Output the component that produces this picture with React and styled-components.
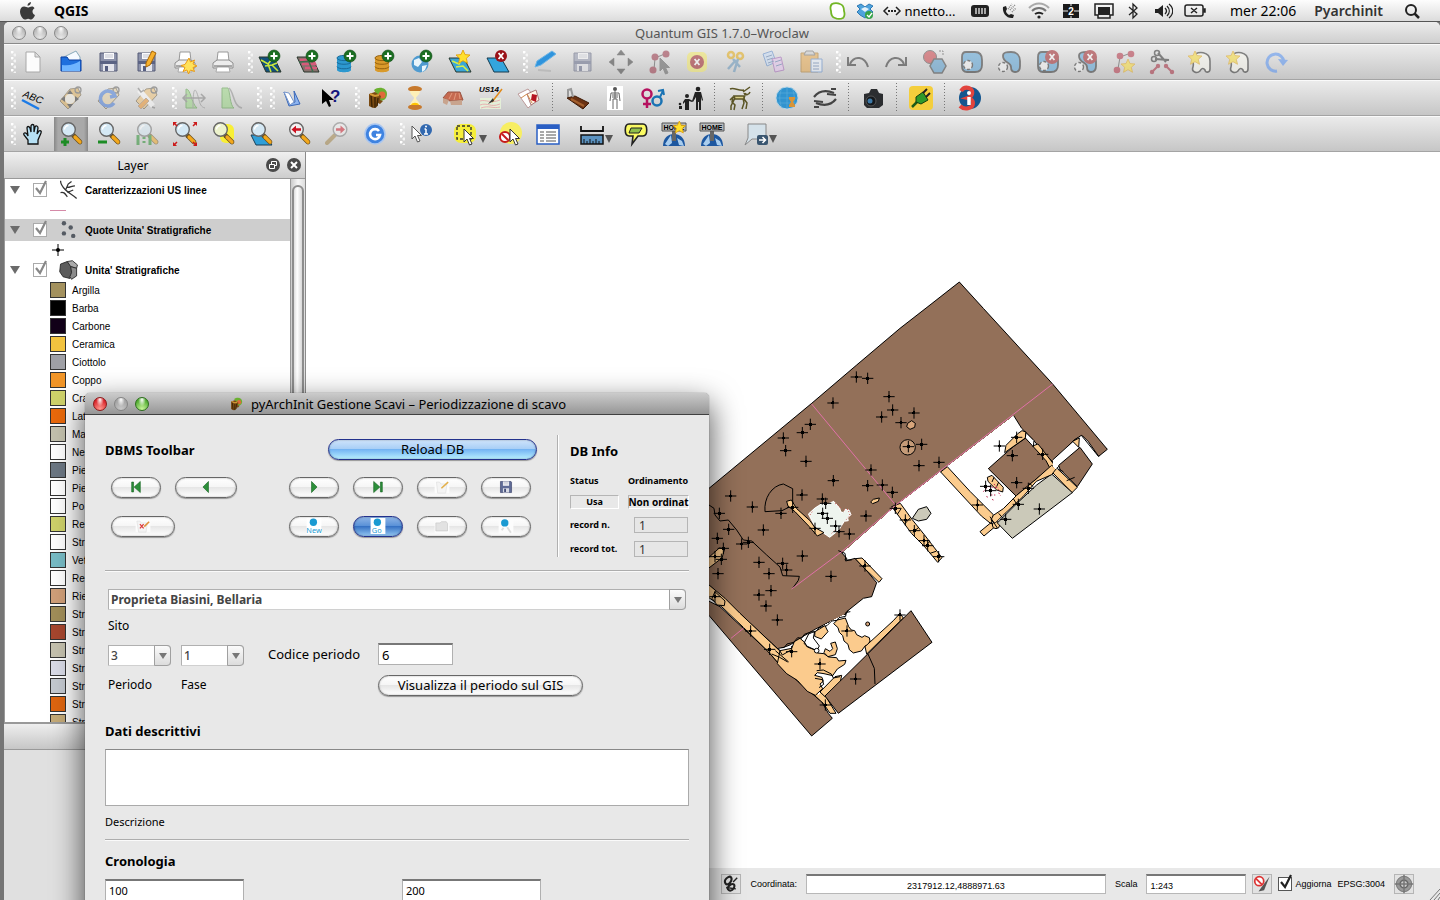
import React from 'react';
import styled, { createGlobalStyle } from 'styled-components';

const ui = '"Lucida Grande", "Noto Sans", "Open Sans", sans-serif';
const helv = '"Liberation Sans", Helvetica, sans-serif';

const GlobalStyle = createGlobalStyle`
  *, *::before, *::after { box-sizing: border-box; }
  html, body { margin: 0; height: 100%; }
  body { font-family: ${ui}; font-size: 13px; color: #000; background: #757575; overflow: hidden; }
  button, input, select, textarea { font: inherit; color: inherit; margin: 0; }
  svg { flex: none; }
`;

/* ---------- shell ---------- */
const Desktop = styled.div`
  position: relative;
  display: flex;
  flex-direction: column;
  height: 100vh;
  overflow: hidden;
  background: #757575;
`;
const MenuBar = styled.header`
  display: flex;
  align-items: center;
  flex: none;
  height: 22px;
  padding: 0 19px 0 18px;
  background: linear-gradient(#fdfdfd, #dcdcdc);
  border-bottom: 1px solid #555;
  font-size: 14px;
  line-height: 20px;
`;
const AppName = styled.strong`
  margin-left: 16px;
`;
const StatusItems = styled.div`
  display: flex;
  align-items: center;
  margin-left: auto;
`;
const StatusItem = styled.span`
  display: flex;
  justify-content: center;
  width: ${(p) => p.$w}px;
  font-size: 13px;
`;
const Clock = styled.span`
  margin: 0 18px 0 15px;
  white-space: nowrap;
`;
const UserName = styled.span`
  margin-right: 20px;
  font-weight: 600;
  color: #333;
`;
const MainWindow = styled.main`
  display: flex;
  flex-direction: column;
  flex: 1;
  min-height: 0;
  margin-left: 4px;
  background: #e8e8e8;
  border-radius: 5px 5px 0 0;
  overflow: hidden;
`;
const TitleBar = styled.div`
  position: relative;
  display: flex;
  align-items: center;
  justify-content: center;
  gap: 7px;
  flex: none;
  height: 22px;
  border-bottom: 1px solid ${(p) => (p.$active ? '#404040' : '#8a8a8a')};
  background: ${(p) => (p.$active ? 'linear-gradient(#cbcbcb, #969696)' : 'linear-gradient(#ececec, #cfcfcf)')};
  color: ${(p) => (p.$active ? '#000' : '#555')};
  border-radius: 5px 5px 0 0;
  line-height: 20px;
`;
const Lights = styled.div`
  position: absolute;
  left: 8px;
  top: 4px;
  display: flex;
  gap: 7px;
`;
const Light = styled.button`
  width: 14px;
  height: 14px;
  padding: 0;
  border: 1px solid ${(p) => p.$edge || '#888'};
  border-radius: 50%;
  background: radial-gradient(ellipse at 50% 15%, #fff 0, transparent 45%),
    radial-gradient(circle at 50% 90%, ${(p) => p.$glow || '#e8e8e8'}, ${(p) => p.$c || '#b8b8b8'} 75%);
`;

/* ---------- toolbars ---------- */
const Toolbar = styled.div`
  display: flex;
  align-items: stretch;
  gap: 1px;
  flex: none;
  height: 36px;
  border-top: 1px solid #fafafa;
  border-bottom: 1px solid #a4a4a4;
  background: linear-gradient(#ebebeb, #c6c6c6);
`;
const ToolGroup = styled.div`
  display: flex;
  gap: 4px;
  min-width: 12px;
`;
const Handle = styled.span`
  width: 5px;
  margin: 6px -4px 6px 7px;
  background:
    radial-gradient(circle at 1px 1px, #fff 1px, transparent 2px) 0 0 / 5px 6px,
    radial-gradient(circle at 4px 4px, #f4f4f4 1px, transparent 2px) 0 0 / 5px 6px;
`;
const ToolButton = styled.button`
  display: flex;
  align-items: center;
  justify-content: ${(p) => (p.$menu ? 'flex-end' : 'center')};
  width: ${(p) => (p.$menu ? 46 : 34)}px;
  padding: 0 ${(p) => (p.$menu ? 2 : 0)}px 0 0;
  border: 0;
  background: ${(p) => (p.$on ? 'linear-gradient(90deg, #888, #a9a9a9 12%, #a9a9a9 88%, #888)' : 'none')};
  svg { opacity: ${(p) => (p.$off ? 0.5 : 1)}; }
`;
const Separator = styled.span`
  width: 6px;
  margin: 2px 0;
  background: repeating-linear-gradient(#777 0 1px, transparent 1px 3px) 2px 0 / 1px 100% no-repeat;
`;
const MenuArrow = styled.i`
  width: 0;
  margin-top: 10px;
  border: 4px solid transparent;
  border-top: 8px solid #555;
  border-bottom: 0;
`;

/* ---------- layer dock ---------- */
const Workspace = styled.div`
  display: flex;
  flex: 1;
  min-height: 0;
`;
const Dock = styled.aside`
  display: flex;
  flex-direction: column;
  flex: none;
  width: 302px;
  border-right: 1px solid #8c8c8c;
  background: #e0e0e0;
`;
const DockHeader = styled.div`
  display: flex;
  align-items: center;
  flex: none;
  gap: 7px;
  height: 27px;
  padding: 0 4px 0 3px;
  border-bottom: 1px solid #999;
  background: linear-gradient(#f0f0f0, #cdcdcd);
  font-size: 12px;
`;
const DockTitle = styled.span`
  flex: 1;
  text-align: center;
`;
const RoundButton = styled.button`
  display: flex;
  width: 14px;
  height: 14px;
  padding: 0;
  border: 0;
  border-radius: 50%;
  background: #4a4a4a;
`;
const TreeArea = styled.div`
  display: flex;
  flex: 1;
  min-height: 0;
  border-left: 1px solid #999;
  background: #fff;
`;
const Tree = styled.div`
  flex: 1;
  overflow: hidden;
  font-family: ${helv};
  font-size: 10px;
`;
const LayerRow = styled.label`
  display: flex;
  align-items: center;
  height: 22px;
  padding-left: 5px;
  font-weight: bold;
  background: ${(p) => (p.$selected ? '#cecece' : 'transparent')};
`;
const Disclosure = styled.i`
  width: 0;
  margin-right: 13px;
  border: 5px solid transparent;
  border-top: 8px solid #6b6b6b;
  border-bottom: 0;
`;
const LayerIcon = styled.span`
  display: flex;
  width: 22px;
  margin: 0 5px 0 11px;
`;
const SymbolRow = styled.div`
  display: flex;
  align-items: center;
  gap: 6px;
  height: 18px;
  padding-left: 45px;
  white-space: nowrap;
`;
const Swatch = styled.span`
  width: 16px;
  height: 16px;
  border: 1px solid #333;
  background: ${(p) => p.$c};
`;
const ScrollTrack = styled.div`
  width: 15px;
  border-left: 1px solid #999;
  padding-top: 6px;
  background: linear-gradient(90deg, #ccc, #f6f6f6 50%, #ddd);
`;
const ScrollThumb = styled.div`
  height: 100%;
  margin: 0 1px;
  border: 2px solid #8d8d8d;
  border-radius: 7px 7px 0 0;
  background: linear-gradient(90deg, #ddd, #fff 40%, #d8d8d8);
`;
const DockFooter = styled.div`
  flex: none;
  height: 178px;
  border-top: 2px solid #999;
`;
const FooterBar = styled.div`
  height: 26px;
  border-bottom: 1px solid #999;
  background: linear-gradient(#eee, #c6c6c6);
`;
const CheckWrap = styled.span`
  position: relative;
  display: flex;
`;
const CheckInput = styled.input`
  appearance: none;
  width: 14px;
  height: 14px;
  border: 1px solid ${(p) => (p.$dark ? '#555' : '#aaa')};
  background: #fff;
`;
const Tick = styled.svg`
  position: absolute;
  left: 0;
  top: -3px;
  pointer-events: none;
`;

/* ---------- map ---------- */
const MapColumn = styled.section`
  display: flex;
  flex-direction: column;
  flex: 1;
  min-width: 0;
`;
const MapView = styled.div`
  flex: 1;
  min-height: 0;
  overflow: hidden;
  background: #fff;
`;
const StatusBar = styled.footer`
  display: flex;
  align-items: center;
  justify-content: flex-end;
  flex: none;
  height: 32px;
  background: #e8e8e8;
  font-family: ${helv};
  font-size: 9px;
  white-space: nowrap;
`;
const StatusLabel = styled.label`
  margin: 0 ${(p) => p.$r}px 0 ${(p) => p.$l || 9}px;
`;
const StatusInput = styled.input`
  width: ${(p) => p.$w}px;
  height: 20px;
  padding: 3px 3px 0;
  border: 1px solid #b8b8b8;
  border-top: 2px solid #777;
  background: #fff;
  text-align: ${(p) => p.$align || 'left'};
`;
const StatusButton = styled.button`
  display: flex;
  align-items: center;
  justify-content: center;
  width: 20px;
  height: 20px;
  padding: 0;
  border: 1px solid #b5b5b5;
  background: #e2e2e2;
`;
const CheckLabel = styled.label`
  display: flex;
  align-items: center;
  gap: 3px;
  margin: 0 6px;
`;

/* ---------- dialog ---------- */
const Dialog = styled.form`
  position: absolute;
  left: 85px;
  top: 393px;
  width: 624px;
  min-height: 560px;
  border-radius: 5px 5px 0 0;
  background: #e8e8e8;
  box-shadow: 0 0 1px rgba(0, 0, 0, 0.7), 0 12px 30px 2px rgba(0, 0, 0, 0.65);
`;
const DialogBody = styled.div`
  display: flex;
  flex-direction: column;
  padding: 20px;
`;
const TopSection = styled.section`
  display: flex;
  height: 122px;
  margin-bottom: 13px;
`;
const DbTools = styled.div`
  width: 432px;
  margin-right: 20px;
  padding-top: 4px;
`;
const ToolsHead = styled.div`
  display: flex;
  align-items: center;
  justify-content: space-between;
  height: 21px;
  margin-bottom: 17px;
`;
const Heading = styled.h2`
  margin: 0;
  font-size: 13px;
  font-weight: bold;
  line-height: 20px;
`;
const ButtonGrid = styled.div`
  display: grid;
  grid-template-columns: 64px 114px repeat(3, 64px) 50px;
  row-gap: 18px;
  margin-left: 6px;
`;
const Pill = styled.button`
  display: flex;
  align-items: center;
  justify-content: center;
  grid-column: ${(p) => p.$col || 'auto'};
  width: ${(p) => p.$w || 50}px;
  height: 21px;
  padding: 0 0 1px;
  border: 1px solid ${(p) => (p.$tone ? '#23318c' : '#666')};
  border-radius: 11px;
  line-height: 18px;
  white-space: nowrap;
  background: ${(p) =>
    p.$tone === 'aqua'
      ? 'linear-gradient(#cfe4fb 0, #a9cff6 45%, #74b4f3 50%, #b8efff 100%)'
      : p.$tone === 'deep'
      ? 'linear-gradient(#8fb5e6 0, #5b92d8 45%, #3672c4 50%, #93c6f2 100%)'
      : 'linear-gradient(#fff 0, #f6f6f6 45%, #e6e6e6 50%, #fff 100%)'};
  box-shadow: 0 1px 1px rgba(0, 0, 0, 0.35), inset 0 0 2px rgba(0, 0, 0, 0.35);
`;
const DbInfo = styled.div`
  display: grid;
  grid-template-columns: 58px 61px;
  grid-template-rows: 32px 28px 14px 32px 16px;
  align-items: center;
  padding-left: 12px;
  border-left: 1px solid #b0b0b0;
  box-shadow: inset 1px 0 #fff;
  font-size: 9px;
  font-weight: bold;
  white-space: nowrap;
`;
const InfoHeading = styled(Heading)`
  grid-column: 1 / 3;
`;
const InfoLabel = styled.label`
  line-height: 14px;
`;
const StatusValue = styled.output`
  width: ${(p) => p.$w}px;
  height: 14px;
  display: flex;
  justify-content: center;
  border: 1px solid #b5b5b5;
  border-right-color: #fff;
  border-bottom-color: #fff;
  line-height: 12px;
  font-size: ${(p) => p.$size || 9}px;
`;
const RecordInput = styled.input`
  width: 54px;
  height: 16px;
  margin-left: 6px;
  padding: 0 4px;
  border: 1px solid #b5b5b5;
  background: #e6e6e6;
  font-size: 12px;
  font-weight: normal;
  color: #333;
`;
const Rule = styled.hr`
  width: 100%;
  height: 2px;
  margin: 0;
  border: 0;
  border-top: 1px solid #adadad;
  background: #fafafa;
`;
const Field = styled.div`
  display: flex;
  flex-direction: column;
  gap: ${(p) => p.$gap || 8}px;
  width: ${(p) => (p.$w ? `${p.$w}px` : 'auto')};
`;
const SiteField = styled(Field)`
  margin: 17px 3px 0;
`;
const NarrowField = styled(Field)`
  padding-top: 2px;
`;
const SmallLabel = styled.label`
  font-size: ${(p) => p.$size || 12}px;
  line-height: 16px;
`;
const SelectBox = styled.span`
  position: relative;
  display: flex;
  height: 21px;
`;
const SelectInput = styled.select`
  appearance: none;
  width: 100%;
  padding: 0 20px 0 2px;
  border: 1px solid #b0b0b0;
  border-bottom-color: #d0d0d0;
  border-radius: 0 4px 4px 0;
  background: #fff;
  color: #444;
  font-size: 12px;
  font-weight: ${(p) => (p.$bold ? 'bold' : '500')};
`;
const SelectCap = styled.span`
  position: absolute;
  right: 0;
  top: 0;
  display: flex;
  align-items: center;
  justify-content: center;
  width: 17px;
  height: 21px;
  border: 1px solid #a0a0a0;
  border-radius: 0 4px 4px 0;
  background: linear-gradient(#fbfbfb, #dcdcdc);
  pointer-events: none;
  &::after {
    content: '';
    border: 4px solid transparent;
    border-top: 6px solid #777;
    border-bottom: 0;
  }
`;
const PeriodRow = styled.section`
  display: flex;
  align-items: flex-start;
  gap: 10px;
  margin: 9px 3px 0;
`;
const CodeGrid = styled.div`
  display: grid;
  grid-template-columns: 110px auto;
  row-gap: 10px;
  align-items: center;
  margin-left: 14px;
`;
const TextInput = styled.input`
  width: ${(p) => p.$w}px;
  height: 22px;
  padding: 0 3px;
  border: 1px solid #b0b0b0;
  border-top: 2px solid #777;
  background: #fff;
  font-size: ${(p) => p.$size || 13}px;
`;
const Description = styled.textarea`
  display: block;
  width: 100%;
  height: 57px;
  margin: 8px 0 6px;
  border: 1px solid #aaa;
  border-top-color: #888;
  background: #fff;
  resize: none;
`;
const Section = styled.section`
  margin-top: ${(p) => p.$top}px;
`;
const Chronology = styled.div`
  display: grid;
  grid-template-columns: 297px 1fr;
  margin-top: 8px;
`;

/* ---------- icons ---------- */
const Icon = ({ size = 26, children }) => (
  <svg width={size} height={size} viewBox="0 0 26 26" fill="none" aria-hidden="true">{children}</svg>
);
const Plus = ({ x = 17, y = 7 }) => (
  <g><circle cx={x} cy={y} r="6" fill="#1b6e22" stroke="#0f4a14" strokeWidth=".6" />
    <path d={`M${x - 3.5} ${y}h7M${x} ${y - 3.5}v7`} stroke="#fff" strokeWidth="2" /></g>
);
const RedX = ({ x = 16, y = 7, r = 6 }) => (
  <g><circle cx={x} cy={y} r={r} fill="#9a1218" />
    <path d={`M${x - 2.4} ${y - 3}l4.8 6M${x + 2.4} ${y - 3}l-4.8 6`} stroke="#fff" strokeWidth="1.8" /></g>
);
const Star = ({ x = 0, y = 0, s = 1 }) => (
  <path transform={`translate(${x} ${y}) scale(${s})`} d="M7 0l2 4.600 5 .4-3.700 3.300 1.200 5L7 10.700l-4.500 2.600 1.200-5L0 5l5-.4z" fill="#ffe02e" stroke="#e09a00" strokeWidth=".8" />
);
const Lens = ({ tint = '#d4e8f4', handle = '#f3a81c' }) => (
  <g><path d="M15.500 14.500l6.500 6.500" stroke="#6a5020" strokeWidth="4.600" strokeLinecap="round" />
    <path d="M17 16l5 5" stroke={handle} strokeWidth="3.200" strokeLinecap="round" />
    <circle cx="10.500" cy="8.500" r="6.800" fill={tint} stroke="#666" strokeWidth="1.400" />
    <path d="M6.500 8.500a4 4 0 0 1 4-4" stroke="#fff" strokeWidth="1.500" /></g>
);
const Floppy = () => (
  <g><path d="M4 4h17l1 1v17H4z" fill="#5f6b96" stroke="#343d66" /><path d="M8 4h10v7H8z" fill="#f2f2f6" /><path d="M9 6h8M9 8h8" stroke="#b6bac8" />
    <path d="M8 15h10v7H8z" fill="#d8dae4" /><path d="M10 16h3v5h-3z" fill="#454e78" /></g>
);
const Disk = () => (
  <g><path d="M4 4h17v18H4z" fill="#8d93ab" stroke="#555b77" /><path d="M8 4h10v6H8z" fill="#fafafc" /><path d="M9 6h8M9 8h8" stroke="#c2c5d0" />
    <path d="M4 12h17v3H4z" fill="#5b6384" /><path d="M7 15h11v7H7z" fill="#e4e5ec" /><path d="M9 17h3v5H9z" fill="#555d80" /></g>
);
const Printer = () => (
  <g><path d="M8 3h10l1 9H7z" fill="#fff" stroke="#999" /><path d="M3 14l4-3h12l4 3v5H3z" fill="#ececec" stroke="#8d8d8d" />
    <path d="M7 18h12l1 5H6z" fill="#fff" stroke="#aaa" /><path d="M4 17h18" stroke="#666" strokeWidth="1.200" /></g>
);
const MapTile = ({ raster }) => (
  <g><path d="M2 8h15l7 15H9z" fill={raster ? '#87706c' : '#12507c'} stroke="#28362c" />
    {raster ? <path d="M5 11h13l2 4H7M10 19h12" stroke="#d65a7a" strokeWidth="2.500" />
      : <path d="M4 11l7 4 4-5M8 17l7-1 6 6M11 15l3 8M15 16l5-2" stroke="#c9e63a" strokeWidth="1.600" />}
    {raster && <path d="M12 8l6 15M4 13l14-1" stroke="#3c6a4c" strokeWidth="1.500" />}</g>
);
const Cylinder = ({ c, d }) => (
  <g><path d="M4 9v12c0 3 14 3 14 0V9z" fill={c} /><path d="M4 13c0 3 14 3 14 0M4 17.500c0 3 14 3 14 0" stroke={d} /><ellipse cx="11" cy="9" rx="7" ry="2.600" fill={c} stroke={d} /></g>
);
const Cursor = ({ x = 0, y = 0, fill = '#fff', stroke = '#333' }) => (
  <path transform={`translate(${x} ${y})`} d="M0 0v13l3-3 2.500 6 2.500-1-2.500-5.500h4z" fill={fill} stroke={stroke} />
);
const Blob = ({ fill = '#4fa0d8' }) => <path d="M7 3h9c5 0 7 3 7 8v5c0 5-3 7-7 7H8c-4 0-5-3-5-6V8c0-3 1-5 4-5z" fill={fill} stroke="#222" strokeWidth="1.800" />;
const Bean = () => <path d="M6 7c0-4 4-4 8-4 6 0 9 4 9 9v5c0 4-2 6-5 6s-4-2-4-5c0-5-8-4-8-11z" fill="#4fa0d8" stroke="#222" strokeWidth="1.800" />;
const DashCircle = ({ x = 8, y = 17 }) => <circle cx={x} cy={y} r="4.500" fill="#f8f8f8" stroke="#222" strokeWidth="1.400" strokeDasharray="3 2" />;
const Cloud = () => <path d="M8 6c2-4 15-4 15 6v8c0 4-5 4-5 1-2-3-4-1-5 1-3 3-9 1-7-4 1-2 0-4 0-6z" fill="#fffef4" stroke="#222" strokeWidth="1.600" />;
const Globe = () => <g><circle cx="13" cy="13" r="11" fill="#3093cf" stroke="#b6d5e6" /><path d="M2 13h22M4 8h18M4 18h18M13 2v22M8 3c-3 6-3 14 0 20M18 3c3 6 3 14 0 20" stroke="#5faedb" strokeWidth=".6" /></g>;
const HomeGlobe = () => (
  <g><path d="M2 25c0-8 5-12 11-12s11 4 11 12z" fill="#1d57a0" /><path d="M4 23l6-9 1 8-4 3zM16 17l5 3 2 5-5-1z" fill="#a9cdee" /><path d="M11 10h4v10h-4z" fill="#666" />
    <path d="M1 2h24v8H1z" fill="#b9bcbe" stroke="#555" /><text x="13" y="9" textAnchor="middle" fontFamily={helv} fontWeight="bold" fontSize="7" fill="#000">HOME</text></g>
);
const Trunk = () => (
  <g><path d="M10 5c4-4 13-3 13 4 0 5-4 7-7 7z" fill="#6bb02f" /><circle cx="18" cy="10" r="3.500" fill="#e06a3a" /><path d="M5 9l6-2 6 4-1 4 3 1-3 3-2-1-1 4-4 1-4-2z" fill="#7a4a12" /><path d="M7 10l1 12M11 10v13M14 13l-1 8" stroke="#3b2306" strokeWidth="1.400" /><path d="M6 9l5 2 4-1" stroke="#d59b36" strokeWidth="2" /></g>
);
const Tag = ({ c = '#dba94f' }) => <g><path d="M12 4l8-1 3 7-13 14-8-8z" fill={c} stroke="#6b5a3a" /><circle cx="20" cy="5" r="3" stroke="#555" strokeWidth="1.300" /></g>;

const icons = {
  newFile: <path d="M6 3h9l5 5v15H6z M15 3v5h5" fill="#fcfcfc" stroke="#a8a8a8" />,
  open: <g><path d="M4 9l14-7 4 6v6H4z" fill="#f5faff" stroke="#8ab" /><path d="M3 8h6l2 3h12v11H3z" fill="#1f6fdd" stroke="#0b3fa0" /><path d="M4 16c8 1 13-1 18-4v10H4z" fill="#6fb4ff" /></g>,
  save: <Disk />,
  saveAs: <g><Disk /><path d="M12 14l6-12 4 2-6 12-4 2z" fill="#f7b02c" stroke="#a86708" /></g>,
  printNew: <g><Printer /><path d="M17 9l1.500 4 4-2-1.500 4 4 2-4 1.500 1.500 4-4-1.500-2 4-1.500-4-4 1.500 2-4-4-2 4-1z" fill="#ffe25a" stroke="#e99a16" /></g>,
  print: <Printer />,
  addVector: <g><MapTile /><Plus /></g>,
  addRaster: <g><MapTile raster /><Plus /></g>,
  addPostgis: <g><Cylinder c="#2c98cf" d="#1a6b9a" /><Plus /></g>,
  addSpatialite: <g><Cylinder c="#d99a2b" d="#96610f" /><Plus /></g>,
  addWms: <g><circle cx="11" cy="15" r="8.500" fill="#4f9bd0" /><path d="M5 11l5-2 3 4-4 5-4-2zM13 17l5-1-2 5-3 2z" fill="#e8f5fb" /><Plus /></g>,
  newShape: <g><path d="M2 9h15l7 14H9z" fill="#3aa6d8" stroke="#28362c" /><path d="M5 12l7 3 3-5M9 18l7-1 5 5" stroke="#d5ee4a" strokeWidth="1.600" /><Star x="9" y="1" /></g>,
  removeLayer: <g><path d="M2 9h14l8 14H9z" fill="#34a5dd" stroke="#173a4e" /><RedX /></g>,
  edit: <g><path d="M6 21l13 1" stroke="#bbb" strokeWidth="2" /><path d="M3 18l2-6L20 2l4 3-15 11z" fill="#2f94dd" stroke="#6fb5e4" /></g>,
  move: <path d="M13 1l4 5H9zM13 25l4-5H9zM1 13l5-4v8zM25 13l-5-4v8z" fill="#333" stroke="#333" strokeWidth=".5" />,
  node: <g><path d="M8 21l1-12 12-5" stroke="#444" /><circle cx="9" cy="8" r="3.500" fill="#93263a" /><circle cx="20" cy="5" r="3.500" fill="#93263a" /><circle cx="7" cy="21" r="3.500" fill="#93263a" /><Cursor x="14" y="9" fill="#555" stroke="#555" /></g>,
  deleteSel: <g><rect x="3" y="3" width="20" height="20" rx="5" fill="#f6ea5c" /><RedX x={13} y={13} r={7} /></g>,
  cut: <g><circle cx="9" cy="6" r="3" stroke="#e2a500" strokeWidth="2.500" /><circle cx="18" cy="7" r="3" stroke="#e2a500" strokeWidth="2.500" /><path d="M11 10l7 8M16 10l-4 13M14 11l-8 9" stroke="#5a8fb8" strokeWidth="2.500" /></g>,
  copy: <g><path d="M3 5l9-3 4 11-9 4z" fill="#c5dcf8" stroke="#5283c9" /><path d="M12 10l9-2 3 13-9 2z" fill="#e7c5f2" stroke="#9c5bb4" /><path d="M6 8l6-2M7 11l6-2M8 14l6-2M15 13l6-2M16 17l6-2" stroke="#57a" /></g>,
  paste: <g><path d="M3 4h17v19H3z" fill="#e9a542" stroke="#a8711c" /><path d="M8 2h7l2 4H6z" fill="#ccc" stroke="#666" /><path d="M13 10h11v13H13z" fill="#eaf3ff" stroke="#5283c9" /><path d="M15 14h6M15 17h6M15 20h6" stroke="#57a" /></g>,
  undo: <path d="M23 18C20 7 9 6 5 15M3 8v8h8" stroke="#222" strokeWidth="2" />,
  redo: <path d="M3 18C6 7 17 6 21 15M23 8v8h-8" stroke="#222" strokeWidth="2" />,
  simplify: <g><circle cx="9" cy="8" r="6.500" fill="#c9333a" stroke="#444" /><path d="M13 10h8l4 7-4 7h-8l-4-7z" fill="#4d99cf" stroke="#333" strokeWidth="1.500" /><path d="M18 2h4v5" stroke="#444" strokeDasharray="2 1" /></g>,
  addRing: <g><Blob /><DashCircle x={9} y={16} /></g>,
  addPart: <g><Bean /><DashCircle x={6} y={18} /></g>,
  delRing: <g><Blob /><DashCircle x={9} y={17} /><RedX x={17} y={8} r={7} /></g>,
  delPart: <g><Bean /><DashCircle x={6} y={18} /><RedX x={17} y={8} r={7} /></g>,
  reshape: <g><path d="M7 20l2-12 11-4" stroke="#444" /><circle cx="9" cy="7" r="3.300" fill="#b02438" /><circle cx="20" cy="5" r="3.300" fill="#b02438" /><circle cx="6" cy="21" r="3.300" fill="#b02438" /><Star x="10" y="10" /></g>,
  split: <g><path d="M9 4l8 9M6 10l14 1" stroke="#222" strokeWidth="2" /><circle cx="8" cy="4" r="2.500" stroke="#222" strokeWidth="1.500" /><circle cx="5" cy="10" r="2.500" stroke="#222" strokeWidth="1.500" /><path d="M9 17l-6 6M17 17l6 6" stroke="#a01c30" strokeWidth="2" /><circle cx="9" cy="17" r="2.200" fill="#a01c30" /><circle cx="3" cy="23" r="2.200" fill="#a01c30" /><circle cx="17" cy="17" r="2.200" fill="#a01c30" /><circle cx="23" cy="23" r="2.200" fill="#a01c30" /></g>,
  merge: <g><Cloud /><Star x="1" y="2" /></g>,
  rotate: <g><path d="M14 22a8.500 8.500 0 1 1 7-9" stroke="#4a8cf5" strokeWidth="3" /><path d="M15 10l10 1-5 6z" fill="#4a8cf5" /></g>,
  label: <g><path d="M2 15l17 9" stroke="#1d7be6" strokeWidth="2.500" /><text transform="rotate(22 4 10)" x="3" y="12" fontFamily={helv} fontStyle="italic" fontSize="10" fill="#000">ABC</text></g>,
  labelMove: <g><Tag /><circle cx="12" cy="14" r="5" fill="#f3eee0" /><path d="M12 5l3 4H9zM12 23l3-4H9zM3 14l4-3v6zM21 14l-4-3v6z" fill="#222" /></g>,
  labelRotate: <g><Tag c="#e5cfa0" /><path d="M18 18a7.500 7.500 0 1 1 1-7l-5 1" stroke="#3c74d8" strokeWidth="3.500" /></g>,
  labelProps: <g><Tag c="#f0c070" /><path d="M5 5l14 16" stroke="#fff" strokeWidth="5" /><path d="M4 3l3 4 3-2M18 22l3 1" stroke="#777" strokeWidth="1.500" /><path d="M4 21l8-8 3 3-8 8z" fill="#f09020" stroke="#a86" /></g>,
  histA: <g><path d="M5 23V4c5 0 5 14 11 19z" fill="#94d67c" stroke="#4f9a3c" /><path d="M12 23c0-25 3-20 6-8 1 4 2 7 6 8" stroke="#888" /><path d="M2 13h22M6 9l-4 4 4 4M20 9l4 4-4 4" stroke="#777" strokeWidth="1.500" /></g>,
  histB: <g><path d="M3 23V3h6c2 3 2 18 6 20z" fill="#94d67c" stroke="#4f9a3c" /><path d="M10 3c5 4 4 18 13 20" stroke="#888" strokeWidth="1.500" /></g>,
  book: <g><path d="M5 7l5 14 11-2-6-13 1 11-5 2z" fill="#8db4f0" stroke="#3a68b8" /><path d="M5 7l5 1 5 9-4 3z" fill="#fff" stroke="#7897cc" /></g>,
  whats: <g><path d="M5 4v15l4-3 3 6 2-1-2-6h5z" fill="#000" /><text x="13" y="17" fontFamily={helv} fontWeight="bold" fontSize="17" fill="#15157c">?</text></g>,
  arch: <Trunk />,
  hourglass: <g><ellipse cx="13" cy="4" rx="7" ry="3" fill="#c7792c" /><ellipse cx="13" cy="22" rx="7" ry="3" fill="#c7792c" /><path d="M8 6h10c0 4-4 5-4 7s4 4 4 7H8c0-3 4-5 4-7s-4-3-4-7z" fill="#fdf0b8" /><path d="M9 20c1-3 7-3 8 0z" fill="#ffc400" /></g>,
  house: <g><path d="M3 13l5-6h12l3 8-13 1z" fill="#c66a50" stroke="#9a5443" /><path d="M3 13v5l4 2 2-5zM10 16l12-1v5H11z" fill="#c8a48e" /><path d="M12 8l-3 6M16 8l-2 7M19 8l1 6" stroke="#e39a7e" /></g>,
  us14: <g><path d="M2 13h21v11H2z" fill="#e4efd8" /><path d="M2 16c6-2 10 3 20-1M2 20c8-3 10 3 20-1M3 23c8-3 12 1 19-1" stroke="#e8b0b0" /><path d="M24 4L14 17" stroke="#e08a1a" strokeWidth="1.500" /><path d="M15 13l-5 6 6-3z" fill="#333" /><text x="1" y="7" fontFamily={helv} fontWeight="bold" fontStyle="italic" fontSize="8" fill="#000">US14</text></g>,
  cards: <g><path d="M2 9l10-5 9 11-9 8z" fill="#fff" stroke="#b99" /><path d="M11 9l9-4 3 10-8 5z" fill="#fff7e8" stroke="#a77" /><path d="M16 9l5 1-1 7-5-2z" fill="#b51420" /><path d="M5 13l6-4 5 9" stroke="#d08a50" /></g>,
  plank: <g><path d="M3 13l8-2 14 7-6 6z" fill="#6b3213" stroke="#3d1a06" /><path d="M4 12V5l3-1 2 8" stroke="#999" strokeWidth="2" /><path d="M7 14l13 7" stroke="#a3602e" strokeWidth="2" /></g>,
  skeleton: <g><path d="M5 1h16v24H5z" fill="#fff" /><circle cx="13" cy="4" r="2" fill="#555" /><path d="M13 6v8M9 8h8M9 8l-1 8M17 8l1 8M10 10h6M10 12h6M11 14h4M11 14v10M15 14v10" stroke="#666" /></g>,
  gender: <g><circle cx="7" cy="9" r="4.500" stroke="#b5125f" strokeWidth="2.500" /><path d="M7 14v9M3 19h8" stroke="#b5125f" strokeWidth="2.500" /><circle cx="17" cy="16" r="4.500" stroke="#1a73b4" strokeWidth="2.500" /><path d="M20 12l3-6M18 6l5-1 1 5" stroke="#1a73b4" strokeWidth="2" /></g>,
  family: <g fill="#222"><circle cx="20" cy="4" r="2.300" /><path d="M17 7h6l2 8-1 1-1-4v13h-2v-8h-1v8h-2V12l-3 5-1-1z" /><circle cx="9" cy="11" r="2" /><path d="M7 14h4l4 2-1 1-3-1v9H9v-5v5H7v-8l-2 2v-2z" /><circle cx="2" cy="19" r="1.300" /><path d="M1 21h3v3H1z" /></g>,
  animal: <g stroke="#5b5526" strokeWidth="1.500"><path d="M4 4c4-2 8 2 14 1M17 7l7-5M18 8c1 3 5 2 6-1M20 8l-2 5-11-1-3 3M7 12l-1 5 3 3-1 5M9 13l-4 8v4M17 13l1 5-2 6M18 14l3 4-1 6" /><path d="M8 11h10v3H9z" fill="#d8cf8a" /></g>,
  globe: <g><Globe /><path d="M15 12h6v2l-2 3 2 3v2h-6v-2l2-3-2-3z" fill="#d99436" /></g>,
  sync: <g><path d="M2 12c4-5 10-8 20-4M24 14c-4 5-10 8-20 4" stroke="#444" strokeWidth="2.200" /><path d="M15 9l9 1M19 4h5M11 17l-9-1M7 22H2" stroke="#444" strokeWidth="1.800" /></g>,
  camera: <g><path d="M4 9l5-1 2-4h6l2 4 4 1v11l-4 3H7l-3-3z" fill="#2b2d30" /><circle cx="11" cy="16" r="5" fill="#15181c" stroke="#555" /><circle cx="10" cy="16" r="2.500" fill="#3f7aa8" /></g>,
  plug: <g><rect x="1" y="1" width="24" height="24" rx="4" fill="#f4ce3c" /><path d="M4 22l5-5" stroke="#1e5c18" strokeWidth="2.500" /><path d="M8 12l7-5 5 8-7 4-5-2z" fill="#2f9a2a" stroke="#123f10" /><path d="M15 8l4-4M18 12l4-4" stroke="#222" strokeWidth="2" /></g>,
  info3: <g><circle cx="14" cy="13" r="11" fill="#15568f" /><path d="M5 6c4-6 13-3 11 3-1 3-4 4-4 4s5 1 5 5c0 6-9 7-13 3" stroke="#e2443d" strokeWidth="4" /><circle cx="13" cy="8" r="2" fill="#fff" /><path d="M13 12v8" stroke="#fff" strokeWidth="3.500" /></g>,
  pan: <path d="M8 23v-4l-4-5c-1-2 1-3 3-1l1 2-1-8c0-2 2-2 3 0l1 4V5c0-2 3-2 3 0v6l1-5c1-2 3-1 3 1l-1 6 2-3c1-1 3 0 2 2l-3 7v4z" fill="#b6e0f4" stroke="#111" strokeWidth="1.300" />,
  zoomIn: <g><Lens /><path d="M3 21h8M7 17v8" stroke="#1d8c25" strokeWidth="3" /></g>,
  zoomOut: <g><Lens /><path d="M2 21h9" stroke="#1d8c25" strokeWidth="3" /></g>,
  zoomActual: <g><Lens /><path d="M4 14v10M16 14v10M10 16v2M10 20v2" stroke="#1d8c25" strokeWidth="3" /></g>,
  zoomFull: <g><Lens /><path d="M2 2l3 3M24 2l-3 3M2 24l3-3M24 24l-3-3" stroke="#cc1a1a" strokeWidth="1.500" /><path d="M1 1h4L1 5zM25 1h-4l4 4zM1 25h4l-4-4zM25 25h-4l4-4z" fill="#cc1a1a" /></g>,
  zoomSel: <g><rect x="10" y="3" width="14" height="19" rx="6" fill="#f8ef35" /><Lens tint="#ecf2cc" /></g>,
  zoomLayer: <g><path d="M3 14h13l8 10H8z" fill="#2f9fd8" stroke="#1a3f56" /><Lens /></g>,
  zoomLast: <g><Lens tint="#eee" /><path d="M15 8.500H9" stroke="#cc1020" strokeWidth="2.500" /><path d="M10 4.500L5.500 8.500l4.500 4z" fill="#cc1020" /></g>,
  zoomNext: <g><path d="M11 14l-8 8" stroke="#a08040" strokeWidth="4" strokeLinecap="round" /><circle cx="16" cy="8.500" r="6.800" fill="#eee" stroke="#777" strokeWidth="1.400" /><path d="M12 8.500h6" stroke="#cc1020" strokeWidth="2.500" /><path d="M16.500 4.500l4.500 4-4.500 4z" fill="#cc1020" /></g>,
  refresh: <g><circle cx="13" cy="13" r="10" fill="#3f83e0" stroke="#a9c6f0" strokeWidth="1.500" /><path d="M17 10a5 5 0 1 0 1 4h-4" stroke="#fff" strokeWidth="2.600" /></g>,
  identify: <g><Cursor x="3" y="5" stroke="#555" /><circle cx="17" cy="9" r="6" fill="#3269b0" /><path d="M17 8v5M15.500 8H17M15 13h4" stroke="#fff" strokeWidth="1.500" /><circle cx="17" cy="5.500" r="1" fill="#fff" /></g>,
  select: <g><rect x="1" y="3" width="22" height="19" rx="7" fill="#f5ee3a" /><path d="M4 5h14v13H4z" stroke="#333" strokeWidth="1.400" strokeDasharray="3 2" /><Cursor x="11" y="8" /></g>,
  deselect: <g><circle cx="14" cy="12" r="11" fill="#f7ee62" /><circle cx="8" cy="16" r="5" fill="#fff" stroke="#c61a1a" strokeWidth="2" /><path d="M5 13l6 6" stroke="#c61a1a" strokeWidth="2" /><Cursor x="13" y="8" /></g>,
  table: <g><path d="M2 4h22v19H2z" fill="#fff" stroke="#2a5fc4" strokeWidth="1.500" /><path d="M2 4h22v4H2z" fill="#2a5fc4" /><path d="M5 11h4M5 14h4M5 17h4M5 20h4M11 11h10M11 14h10M11 17h10M11 20h10" stroke="#555" strokeWidth="1.200" /></g>,
  measure: <g><path d="M2 5v5h22V5" stroke="#111" strokeWidth="1.800" /><path d="M2 14h22v9H2z" fill="#5b92c0" stroke="#111" strokeWidth="1.500" /><path d="M5 23v-5M8 23v-3M11 23v-5M14 23v-3M17 23v-5M20 23v-3" stroke="#111" /></g>,
  tip: <g><path d="M6 3h14c5 0 5 12 0 12h-5l-6 8 1-8H6C1 15 1 3 6 3z" fill="#fafa62" stroke="#222" strokeWidth="1.600" /><path d="M8 7h11l-3 5H6z" fill="#8fc04a" stroke="#222" /></g>,
  homeNew: <g><HomeGlobe /><Star x="12" y="0" s={0.9} /></g>,
  home: <HomeGlobe />,
  annotation: <g><path d="M5 3h18v15H9l-7 6 3-7z" fill="#d5e2ea" stroke="#888" /><rect x="14" y="14" width="11" height="10" rx="2" fill="#3a5670" /><path d="M16 19h6M19.500 16l3 3-3 3" stroke="#fff" strokeWidth="1.500" /></g>,
};

const Tool = ({ name, off, on, menu }) => (
  <ToolButton type="button" aria-label={name} $off={off} $on={on} $menu={menu}>
    <Icon>{icons[name]}</Icon>
    {menu && <MenuArrow />}
  </ToolButton>
);

/* name flags: "-" dimmed, "+" pressed, "~" drop-down menu; "|" is a separator */
const toolbars = [
  [
    ['newFile', 'open', 'save', 'saveAs', 'printNew', 'print'],
    ['addVector', 'addRaster', 'addPostgis', 'addSpatialite', 'addWms', 'newShape', 'removeLayer'],
    ['edit', '-save', '-move', '-node', '-deleteSel', '-cut', '-copy', '-paste'],
    ['-undo', '-redo', '-simplify', '-addRing', '-addPart', '-delRing', '-delPart', '-reshape', '-split', '-merge', '-merge', '-rotate'],
  ],
  [
    ['label', '-labelMove', '-labelRotate', '-labelProps'],
    ['-histA', '-histB'],
    [],
    ['book', 'whats'],
    ['arch', 'hourglass', 'house', 'us14', 'cards', '|', 'plank', 'skeleton', 'gender', 'family', '|', 'animal', '|', 'globe', 'sync', '|', 'camera', '|', 'plug', '|', 'info3'],
  ],
  [
    ['pan', '+zoomIn', 'zoomOut', '-zoomActual', 'zoomFull', 'zoomSel', 'zoomLayer', 'zoomLast', '-zoomNext', 'refresh'],
    ['identify', '~select', 'deselect', 'table', '~measure', 'tip', 'homeNew', 'home', '~annotation'],
  ],
];

const ToolItem = ({ spec }) => {
  if (spec === '|') return <Separator />;
  const flag = spec[0];
  const name = spec.replace(/^[-+~]/, '');
  return <Tool name={name} off={flag === '-'} on={flag === '+'} menu={flag === '~'} />;
};

/* ---------- layer data ---------- */
const classes = [
  ['Argilla', '#a3915e'], ['Barba', '#000'], ['Carbone', '#110018'], ['Ceramica', '#f2c33f'], ['Ciottolo', '#9fa0a6'],
  ['Coppo', '#f19528'], ['Cra', '#ced16a'], ['Lat', '#e9690b'], ['Ma', '#c3c1ad'], ['Ne', '#fff'],
  ['Pie', '#6c7783'], ['Pie', '#fff'], ['Po', '#fff'], ['Re', '#ced16a'], ['Str', '#fff'], ['Vet', '#77bbc5'],
  ['Re', '#fff'], ['Rie', '#d09f79'], ['Str', '#a18e59'], ['Str', '#a6462e'], ['Str', '#c5c1ae'],
  ['Str', '#d9dbe7'], ['Str', '#c4c9d0'], ['Str', '#de6510'], ['Str', '#c5aa77'],
];

const Checkbox = ({ id, dark }) => (
  <CheckWrap>
    <CheckInput type="checkbox" id={id} defaultChecked $dark={dark} />
    <Tick width="16" height="16" viewBox="0 0 16 16" fill="none">
      <path d="M3 8l4 5 6-12" stroke={dark ? '#222' : '#888'} strokeWidth="2.200" />
    </Tick>
  </CheckWrap>
);

const layerIcons = {
  line: <path d="M3 2c0 5 3 8 6 11 4 4 9 6 13 10M9 13l3-7 4-3M11 10c4 0 5-2 9-2M3 16c4-1 5 1 8 5M11 16l7-3" stroke="#333" strokeWidth="1.500" />,
  point: <g fill="#555b63"><circle cx="7" cy="5" r="2.600" /><circle cx="7" cy="17" r="2.600" /><circle cx="15" cy="10" r="2.600" /><circle cx="18" cy="20" r="2.600" /></g>,
  polygon: <g stroke="#222"><path d="M3 6l8-3 4 5 2 8-3 7-8-2-4-6z" fill="#5c5c5c" /><path d="M11 3l6-1 6 5-1 4-7-2z" fill="#aaa" /><path d="M15 9l7 2v9l-6 4-2-3 2-5z" fill="#8c8c8c" /></g>,
};
const Layer = ({ id, icon, name, selected }) => (
  <LayerRow htmlFor={id} $selected={selected}>
    <Disclosure />
    <Checkbox id={id} />
    <LayerIcon><Icon size={22}>{layerIcons[icon]}</Icon></LayerIcon>
    {name}
  </LayerRow>
);

/* ---------- excavation plan, drawn on a grid of a third of a pixel ---------- */
const BROWN = '#937059';
const TAN = '#fbcb8d';
const marks = [
  [469, 321], [503, 325], [567, 380], [399, 399], [578, 420], [545, 441], [642, 429], [603, 458], [331, 463], [307, 488], [250, 504], [257, 542],
  [318, 574], [400, 632], [306, 675], [92, 678], [157, 711], [513, 600], [503, 647], [547, 645], [577, 667], [657, 587], [717, 577], [625, 530],
  [665, 523], [367, 687], [377, 700], [278, 712], [586, 715], [898, 528], [937, 557], [950, 502], [1028, 553], [950, 638], [985, 655], [857, 649],
  [872, 662], [955, 703], [1018, 717], [832, 705], [917, 748], [58, 730], [86, 778], [52, 805], [190, 780], [243, 730], [125, 822], [145, 817],
  [70, 835], [45, 860], [64, 868], [54, 911], [177, 877], [207, 911], [248, 880], [260, 900], [307, 858], [177, 975], [213, 962], [198, 1008],
  [232, 1050], [393, 919], [345, 775], [368, 730], [382, 745], [407, 768], [417, 785], [448, 792], [498, 738], [495, 888], [616, 750],
  [643, 782], [672, 812], [683, 827], [716, 860], [45, 980], [152, 1083], [209, 1138], [275, 1145], [360, 1182], [441, 1083], [467, 1227],
  [376, 1305], [600, 1035],
];
const Plan = () => (
  <svg width="1134" height="716" viewBox="306 152 1134 716" shapeRendering="crispEdges" role="img" aria-label="Planimetria di scavo">
    <g transform="translate(700 270) scale(.33333)" stroke="#000" strokeWidth="3" fill="none" strokeLinejoin="round">
      <path fill={BROWN} d="M778 36L850 115 1058 342 1140 440 1222 538 1196 559 1165 515 1147 497 1126 507 1058 575 1042 560 1000 510 965 475 940 435 590 703 425 848 440 865 437 873 465 865 490 890 530 938 515 980 490 985 440 1025 430 1040 390 1055 345 1078 300 1105 270 1125 235 1138 27 945-80 860-80 745 27 655 335 400 470 285 600 175 690 105z" />
      <path d="M940 435L590 703 425 848" stroke={BROWN} strokeWidth="4" />
      <path fill={BROWN} d="M-40 960L60 1010 130 1075 200 1140 240 1185 300 1240 365 1295 385 1330 397 1345 335 1398 30 1040-40 970z" />
      <path fill={TAN} d="M-20 905L27 945 75 985 120 1030 215 1120 245 1148 268 1178 320 1230 355 1258 378 1280 408 1330 390 1330 370 1300 300 1237 240 1185 205 1145 130 1072 65 1010-20 950z" />
      <path d="M45 965l30 28-2 14-22-2-15-20z" fill={TAN} />
      <g transform="translate(0 630)">
        <path fill="#fff" d="M235 505l45-5 20-25 45-22 45-28 40-20 60-5 10 70-5 30-120 130-20 15-90-75z" stroke="none" />
        <path d="M235 505l18-3 8-10 20-5 12-14 12 2 8-12 22-8 12 2 10-14 24-6 14-14 16-2 6-8 20-4 2-12 12-2" />
        <path fill={TAN} d="M240 512l35-7 8-20 17-10 14 12 8 14 26 10 4 8 20 2 14 10 24 2 6 10 22-2-4 12-22 14-14 20-26-6-20-3-8 8 22 6 4 12-10 8 8 14-22 20-24-12-30-33-32-20-28-30z" />
        <path fill={TAN} d="M345 455l30-18 9 18-20 22-20-8zM412 420l24-6 10 26 8 10 10 2 6 12 16 8 8-5 14 6 2 10-6 12-8 2-12 16-24 6-12-10-4-16-12-10-4-16-10-10-4-14-13-12z" />
        <path fill={TAN} d="M392 490l14-4 6 20-6 18-22 6-12-12 4-12 14 8 8-8z" />
        <path fill={TAN} d="M600 400l10 14-110 108-5-22 85-78zM405 590l20-4-4 20-45 45-16-15z" />
        <path d="M312 490l14-28 18-8-4 20 18 24-8 14-30-14zM350 572l20-2 24 12 6 12 20-4M345 595l22 4 4 14-14 10M235 505l12 20 24-14M435 405l10-14M215 522l24 10 24 14M226 512l40 34" />
        <circle cx="350" cy="512" r="7" fill="#fff" />
        <path fill={BROWN} d="M633 392l63 95-281 213-40-52 130-128 95-95z" />
        <path d="M503 520l20 45 2 47" />
        <circle cx="503" cy="432" r="6" fill="#d7a57b" />
        <path d="M195 95c-4-40 20-78 55-83l28 14 0 50-32 16z" />
        <path d="M27 75l15 10 3 20 15 18 25-3 25 30 20 30 25 3 45 42 40 36 8 26 50 2-3 12-17 24" />
        <path fill="#eef4ee" stroke="#fff" d="M325 102l20-18 22-14 12 4 22-10 18 20 4 12 8 2 4-10 12 2 6 14-10 10 2 8-12 2-14 22-12 12-18 14-26-18-20-18z" />
        <path d="M405 70l10 6 8 10M432 90l12-2 6 18-12 14M330 105l8-12M395 160l10-10" stroke="#c55" strokeDasharray="3 6" />
        <path fill={TAN} d="M260 64l14-4 16 26 40 36 14 20 28 16-20 10-24-28-42-44-22-18z" />
        <path fill={TAN} d="M20 238l38-34 16 2-8 28-42 32zM466 236l20-2 12 12 48 50-9 11-47-45z" />
        <path fill={TAN} d="M575 80l26-10 35 48 40 50 50 65-13 14-40-48-38-38-50-68z" />
        <path d="M604 85l-12 18M632 112l-18 20M656 142l-18 16M690 184l-16 16M708 214l-18 6" />
        <path fill="#cbc9b9" d="M637 115l18-27 25-8 13 20-13 18-25 5z" />
        <path fill={TAN} d="M512 66l8-8 18-4-3 10-17 7z" />
        <path d="M415 212l20 8 2 14-2 6 20 0" />
      </g>
      <g transform="translate(510 270)">
        <path fill={TAN} d="M212 336l20-16 68 74 70 70-6 28-30-24zM330 515l34-28 10 14-32 27z" />
        <circle cx="378" cy="495" r="11" fill={TAN} />
        <path fill={BROWN} d="M470 232l60 70 18 14-110 92-83-82 45-40 30-26z" />
        <path fill={TAN} d="M404 278l4-22 34-34 14-10 12 4-2 18-34 24zM488 258l16-6 56 72 62 58-16 16-60-62-18-34z" />
        <path fill="#fff" d="M468 218l24 24-2 18-24-26z" />
        <path fill="#cbc9b9" d="M545 342l62 56-180 137-45-46 58-58 60-56z" />
        <path fill={TAN} d="M370 466l30-20 40-40 60-50 45-40 14 10-14 18-46 20-40 46-60 56-24 24-12-10z" />
        <path d="M440 432l-10-16M490 380l-12-10M400 476l-14-16M360 470l22 34" />
        <path fill="#fff" d="M548 300l66-60 20-14 50 64-6 2-44-32-64 52-8 18-14-10z" stroke="none" />
        <path d="M548 300l66-60 20-14 52 64M560 325l70-62" />
        <path fill={BROWN} d="M630 262l37 50-45 68-52-52-4-12z" />
        <path fill={TAN} d="M608 244l20-10-2 28zM352 352l14-6 34 36-2 14-18-6-26-26z" />
        <path d="M372 352l-6 14M386 366l-6 14M560 325l20 10M590 362l24-10" />
        <path d="M345 378l40 6M340 395l12-14M350 408l4 8M366 418l8 4M386 398l6 10M372 372l16 20M362 405l14 0" stroke="#c22b55" strokeDasharray="5 5" />
        <circle cx="113" cy="262" r="23" fill="#c59b78" />
        <path d="M113 190l12-8 11 8-2 12-14 6-10-8z" fill="#d7a57b" />
      </g>
      <path d="M335 402l250 301M1058 342L590 703 425 845 275 957M93 1105l37-30" stroke="#e070a8" strokeWidth="3" />
      {marks.map(([x, y]) => (
        <g key={`${x}-${y}`}>
          <path d={`M${x - 17} ${y}h34M${x} ${y - 17}v34`} />
          <circle cx={x} cy={y} r="5" fill="#000" stroke="none" />
        </g>
      ))}
    </g>
  </svg>
);

/* ---------- dialog pieces ---------- */
const pillIcons = {
  first: <g fill="#2c8f3a" stroke="#14621f"><path d="M6 5h3v16H6zM20 4v18l-10-9z" /></g>,
  prev: <path d="M17 4v18L8 13z" fill="#2c8f3a" stroke="#14621f" />,
  next: <path d="M9 4v18l9-9z" fill="#2c8f3a" stroke="#14621f" />,
  last: <g fill="#2c8f3a" stroke="#14621f"><path d="M17 5h3v16h-3zM6 4v18l10-9z" /></g>,
  edit: <g><path d="M1 3h24v20H1z" fill="#fcfcfc" /><path d="M4 5h5l2 3h10l-2 15H6z" fill="#f4f4f4" stroke="#ddd" /><path d="M12 15L23 5" stroke="#e3b04a" strokeWidth="2.500" /></g>,
  remove: <g><path d="M1 3h24v20H1z" fill="#fcfcfc" /><path d="M3 5h5l2 3h10l-2 15H6z" fill="#f4f4f4" stroke="#ddd" /><path d="M8 10l6 7M14 10l-6 7" stroke="#dc3a3a" strokeWidth="2" /><path d="M15 14l8-8" stroke="#e0903a" strokeWidth="2.500" /></g>,
  folder: <g><path d="M1 1h24v24H1z" fill="#fcfcfc" /><path d="M3 8h7l2-2h8l2 3v12H3z" fill="#e2e2e2" stroke="#c4c4c4" /></g>,
  find: <g><path d="M1 1h24v24H1z" fill="#fcfcfc" /><circle cx="11" cy="8" r="6" fill="#1b9ad2" /><path d="M15 15l6 9M6 20l3-4" stroke="#ddd" strokeWidth="3" /></g>,
  save: <Floppy />,
  plus: <g><path d="M1 0h24v26H1z" fill="#fff" /><circle cx="12" cy="7" r="6" fill="#1b9ad2" /><text x="13" y="25" textAnchor="middle" fontFamily={ui} fontSize="12" fill="#1b9ad2">New</text></g>,
  go: <g><path d="M1 0h24v26H1z" fill="#fff" /><circle cx="12" cy="7" r="6" fill="#1b9ad2" /><text x="11" y="25" textAnchor="middle" fontFamily={ui} fontSize="12" fill="#1b9ad2">Go</text></g>,
};
const pills = [
  { icon: 'first' }, { icon: 'prev', w: 62 }, { icon: 'next' }, { icon: 'last' }, { icon: 'edit' }, { icon: 'save' },
  { icon: 'remove', w: 64 }, { icon: 'plus', col: 3 }, { icon: 'go', tone: 'deep' }, { icon: 'folder' }, { icon: 'find' },
];

const Combo = ({ id, value, bold }) => (
  <SelectBox>
    <SelectInput id={id} $bold={bold} defaultValue={value}><option>{value}</option></SelectInput>
    <SelectCap />
  </SelectBox>
);

const PeriodDialog = () => (
  <Dialog onSubmit={(e) => e.preventDefault()}>
    <TitleBar $active>
      <Lights>
        <Light type="button" aria-label="Chiudi" $c="#d81f26" $glow="#ff9a90" $edge="#8c1a1a" />
        <Light type="button" aria-label="Riduci" $c="#a2a2a2" $glow="#c8c8c8" $edge="#858585" />
        <Light type="button" aria-label="Ingrandisci" $c="#4ba82c" $glow="#c8f59a" $edge="#2d6e1d" />
      </Lights>
      <Icon size={16}>{icons.arch}</Icon>
      pyArchInit Gestione Scavi – Periodizzazione di scavo
    </TitleBar>
    <DialogBody>
      <TopSection>
        <DbTools>
          <ToolsHead>
            <Heading>DBMS Toolbar</Heading>
            <Pill type="button" $w={209} $tone="aqua">Reload DB</Pill>
          </ToolsHead>
          <ButtonGrid>
            {pills.map((p) => (
              <Pill key={p.icon} type="button" aria-label={p.icon} $w={p.w} $col={p.col} $tone={p.tone}>
                <Icon size={16}>{pillIcons[p.icon]}</Icon>
              </Pill>
            ))}
          </ButtonGrid>
        </DbTools>
        <DbInfo>
          <InfoHeading>DB Info</InfoHeading>
          <InfoLabel htmlFor="status">Status</InfoLabel>
          <InfoLabel htmlFor="order">Ordinamento</InfoLabel>
          <StatusValue id="status" $w={49}>Usa</StatusValue>
          <StatusValue id="order" $w={61} $size={10}>Non ordinat</StatusValue>
          <InfoLabel htmlFor="rec">record n.</InfoLabel>
          <RecordInput id="rec" defaultValue="1" readOnly />
          <InfoLabel htmlFor="tot">record tot.</InfoLabel>
          <RecordInput id="tot" defaultValue="1" readOnly />
        </DbInfo>
      </TopSection>
      <Rule />
      <SiteField>
        <Combo id="site" value="Proprieta Biasini, Bellaria" bold />
        <SmallLabel htmlFor="site">Sito</SmallLabel>
      </SiteField>
      <PeriodRow>
        <NarrowField $w={63} $gap={11}>
          <Combo id="period" value="3" />
          <SmallLabel htmlFor="period">Periodo</SmallLabel>
        </NarrowField>
        <NarrowField $w={63} $gap={11}>
          <Combo id="phase" value="1" />
          <SmallLabel htmlFor="phase">Fase</SmallLabel>
        </NarrowField>
        <CodeGrid>
          <label htmlFor="code">Codice periodo</label>
          <TextInput id="code" $w={75} defaultValue="6" />
          <Pill type="button" $w={205} $col={2}>Visualizza il periodo sul GIS</Pill>
        </CodeGrid>
      </PeriodRow>
      <Section $top={25}>
        <Heading as="label" htmlFor="description">Dati descrittivi</Heading>
        <Description id="description" />
        <SmallLabel $size={11} htmlFor="description">Descrizione</SmallLabel>
      </Section>
      <Section $top={9}>
        <Rule />
      </Section>
      <Section $top={10}>
        <Heading>Cronologia</Heading>
        <Chronology>
          <TextInput aria-label="Cronologia iniziale" $w={139} $size={11} defaultValue="100" />
          <TextInput aria-label="Cronologia finale" $w={139} $size={11} defaultValue="200" />
        </Chronology>
      </Section>
    </DialogBody>
  </Dialog>
);

const Glyph = ({ w = 20, children }) => <svg width={w} height="18" viewBox={`0 0 ${w} 18`} fill="none" aria-hidden="true">{children}</svg>;

const SystemMenu = () => (
  <MenuBar>
    <Glyph>
      <path d="M13 0c0 2-1.500 3.800-3.500 3.800C9.300 2 11 .3 13 0zM16.500 6.200c-3 1.800-2.400 5.400.5 6.800-.8 2.300-2.300 4.500-3.700 4.500-1.300 0-1.700-.8-3.200-.8s-2 .8-3.200.8C4.500 17.500 2 13 2 9.600c0-3.300 2-5.100 4.200-5.100 1.500 0 2.600 1 3.800 1 1 0 2.300-1.100 4-1.100 1 0 2 .6 2.500 1.800z" fill="#3a3a3a" />
    </Glyph>
    <AppName>QGIS</AppName>
    <StatusItems>
      <StatusItem $w={28}><Glyph><path d="M5 2c2-1 6-1 8 0 4 1 4 5 4 7 1 3 1 5-1 7-2 1-6 1-8 0-4-1-4-5-4-7-1-3-1-5 1-7z" fill="#fff" stroke="#72b626" strokeWidth="1.800" /></Glyph></StatusItem>
      <StatusItem $w={28}><Glyph><path d="M2 4l4-2 4 3 4-3 4 2-3 3 3 3-3 3-5 3-5-3-3-3 3-3z" fill="#4fa3dd" stroke="#2e79b4" /><path d="M6 7l4-2 4 2-4 3z" fill="#e4f2fb" /><circle cx="14" cy="13" r="4" fill="#36a34a" /><path d="M12 13l2 2 3-4" stroke="#fff" strokeWidth="1.300" /></Glyph></StatusItem>
      <StatusItem $w={26}><Glyph><path d="M6 5L2 9l4 4M14 5l4 4-4 4" stroke="#222" strokeWidth="1.500" /><path d="M6 9h8" stroke="#222" strokeWidth="2" strokeDasharray="2 1" /></Glyph></StatusItem>
      <StatusItem $w={50}>nnetto...</StatusItem>
      <StatusItem $w={49}><Glyph><rect x="1" y="3" width="18" height="12" rx="3" fill="#222" /><path d="M6 6v6M9 6v6M12 6v6M15 6v6" stroke="#eee" strokeWidth="1.300" /></Glyph></StatusItem>
      <StatusItem $w={10}><Glyph><path d="M4 5c-1 6 4 12 10 11l1-3-3-1-2 1c-2-1-3-3-3-4l1-2-1-3z" fill="#222" /><path d="M11 8l5-5M13 10l4-4M9 7l4-5" stroke="#888" strokeDasharray="1 1" strokeWidth="1.500" /></Glyph></StatusItem>
      <StatusItem $w={50}><Glyph w={22}><path d="M1 6c6-6 14-6 20 0" stroke="#aaa" strokeWidth="2" /><path d="M4 9c4-4 10-4 14 0" stroke="#777" strokeWidth="2" /><path d="M7 12c3-2 5-2 8 0" stroke="#222" strokeWidth="2" /><circle cx="11" cy="15" r="1.600" fill="#222" /></Glyph></StatusItem>
      <StatusItem $w={13}><Glyph w={18}><path d="M1 2h16v14H1z" fill="#1a1a1a" /><path d="M1 9h5M12 9h5M9 2v2M9 14v2" stroke="#eee" /><text x="9" y="13" textAnchor="middle" fontFamily={helv} fontWeight="bold" fontSize="10" fill="#fff">2</text></Glyph></StatusItem>
      <StatusItem $w={53}><Glyph><path d="M1 2h18v11h-3v3H4v-3H1z" stroke="#222" strokeWidth="1.500" /><path d="M4 5h12v8H4z" fill="#222" /></Glyph></StatusItem>
      <StatusItem $w={6}><Glyph w={14}><path d="M3 5l8 7-4 4V2l4 4-8 7" stroke="#222" strokeWidth="1.300" /></Glyph></StatusItem>
      <StatusItem $w={53}><Glyph><path d="M2 7h3l5-4v12l-5-4H2z" fill="#222" /><path d="M12 6c2 2 2 4 0 6M14 4c3 3 3 7 0 10M16 2c5 4 5 10 0 14" stroke="#222" strokeWidth="1.300" /></Glyph></StatusItem>
      <StatusItem $w={12}><Glyph w={22}><rect x="1" y="3" width="18" height="11" rx="2" stroke="#222" strokeWidth="1.500" /><path d="M20 7h1v3h-1zM7 6l6 5M13 6l-6 5" stroke="#222" strokeWidth="1.500" /></Glyph></StatusItem>
      <StatusItem $w={14} />
      <Clock>mer 22:06</Clock>
      <UserName>Pyarchinit</UserName>
      <Glyph w={18}><circle cx="8" cy="8" r="5" stroke="#222" strokeWidth="2" /><path d="M11.500 11.500L16 16" stroke="#222" strokeWidth="2.500" /></Glyph>
    </StatusItems>
  </MenuBar>
);

export default function App() {
  return (
    <Desktop>
      <GlobalStyle />
      <SystemMenu />
      <MainWindow>
        <TitleBar>
          <Lights>
            <Light aria-label="Chiudi" /><Light aria-label="Riduci" /><Light aria-label="Ingrandisci" />
          </Lights>
          Quantum GIS 1.7.0–Wroclaw
        </TitleBar>
        {toolbars.map((groups, i) => (
          <Toolbar key={i}>
            {groups.map((group, g) => (
              <ToolGroup key={g}>
                <Handle />
                {group.map((spec, n) => <ToolItem key={n} spec={spec} />)}
              </ToolGroup>
            ))}
          </Toolbar>
        ))}
        <Workspace>
          <Dock>
            <DockHeader>
              <DockTitle>Layer</DockTitle>
              <RoundButton type="button" aria-label="Sgancia">
                <svg width="14" height="14" fill="none"><path d="M5.500 6V3.500h5v4H8.500M3.500 6.500h5v4h-5z" stroke="#fff" /></svg>
              </RoundButton>
              <RoundButton type="button" aria-label="Chiudi pannello">
                <svg width="14" height="14" fill="none"><path d="M4 4l6 6M10 4l-6 6" stroke="#fff" strokeWidth="2" /></svg>
              </RoundButton>
            </DockHeader>
            <TreeArea>
              <Tree>
                <Layer id="l1" icon="line" name="Caratterizzazioni US linee" />
                <SymbolRow><svg width="16" height="3"><path d="M0 1.500h16" stroke="#d58aa8" /></svg></SymbolRow>
                <Layer id="l2" icon="point" name="Quote Unita' Stratigrafiche" selected />
                <SymbolRow><svg width="16" height="12"><path d="M2 6h12M8 0v12" stroke="#000" /><circle cx="8" cy="6" r="2" /></svg></SymbolRow>
                <Layer id="l3" icon="polygon" name="Unita' Stratigrafiche" />
                {classes.map(([name, color], i) => (
                  <SymbolRow key={i}><Swatch $c={color} />{name}</SymbolRow>
                ))}
              </Tree>
              <ScrollTrack><ScrollThumb /></ScrollTrack>
            </TreeArea>
            <DockFooter><FooterBar /></DockFooter>
          </Dock>
          <MapColumn>
            <MapView><Plan /></MapView>
            <StatusBar>
              <StatusButton type="button" aria-label="Posizione del mouse">
                <Icon size={18}><path d="M9 3c4-2 6 2 4 6s-6 6-8 3 0-7 4-9zM10 16c3-4 8-4 8 0s-5 8-8 6-2-4 0-6z" stroke="#222" strokeWidth="3" /><path d="M16 10l6-6M6 18l14 2" stroke="#222" strokeWidth="2" /></Icon>
              </StatusButton>
              <StatusLabel htmlFor="coord" $r={9}>Coordinata:</StatusLabel>
              <StatusInput id="coord" $w={300} $align="center" defaultValue="2317912.12,4888971.63" />
              <StatusLabel htmlFor="scale" $r={9}>Scala</StatusLabel>
              <StatusInput id="scale" $w={100} defaultValue="1:243" />
              <StatusLabel as="span" $l={6} $r={0}>
                <StatusButton type="button" aria-label="Ferma il disegno">
                  <Icon size={18}><path d="M24 2L12 18l-4 6 8-2z" fill="#555" /><circle cx="9" cy="9" r="6.500" fill="#fff" stroke="#d33" strokeWidth="2.500" /><path d="M4 5l9 9" stroke="#d33" strokeWidth="2.500" /></Icon>
                </StatusButton>
              </StatusLabel>
              <CheckLabel htmlFor="render"><Checkbox id="render" dark />Aggiorna</CheckLabel>
              <span>EPSG:3004</span>
              <StatusLabel as="span" $r={14}>
                <StatusButton type="button" aria-label="Proiezione">
                  <Icon size={20}><circle cx="13" cy="13" r="10" fill="#999" stroke="#666" /><circle cx="13" cy="13" r="5" fill="#ccc" stroke="#666" strokeWidth="2" /><path d="M13 1v24M1 13h24" stroke="#777" strokeWidth="2" /></Icon>
                </StatusButton>
              </StatusLabel>
              <svg width="12" height="32" fill="none"><path d="M2 32l10-11M6 32l6-7M10 32l2-3" stroke="#777" /></svg>
            </StatusBar>
          </MapColumn>
        </Workspace>
      </MainWindow>
      <PeriodDialog />
    </Desktop>
  );
}
